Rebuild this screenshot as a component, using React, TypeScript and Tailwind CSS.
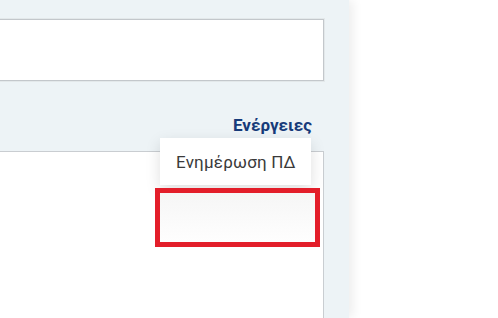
export default function App() {
  return (
    <div className="w-[498px] h-[318px] flex overflow-hidden bg-white font-['Roboto',sans-serif]">
      {/* side panel */}
      <div className="relative z-10 w-[349px] h-full shrink-0 bg-[#edf3f6] shadow-[4px_0_10px_rgba(0,0,0,0.07)] pt-[19px] pr-[25px] flex flex-col">
        <div className="ml-[-12px] h-[62px] bg-white border border-[#c3c7cb] shadow-[0_0_0_1px_#e3e8ea]" />

        <div className="ml-[-12px] mt-[34px] flex justify-end pr-[12px]">
          <span className="text-[17px] leading-[20px] font-bold text-[#173b7a]">Ενέργειες</span>
        </div>

        <div className="relative ml-[-12px] mt-[16px] flex-1 bg-white border-t border-r border-[#c9cdd1]">
          <div className="absolute top-[-14px] right-[12px] w-[151px] h-[47px] bg-white shadow-[0_5px_14px_rgba(0,0,0,0.13)] flex items-center pl-[16px]">
            <span className="text-[17px] leading-[24px] text-[#3a3a3a] tracking-[0.2px]">Ενημέρωση ΠΔ</span>
          </div>
          <div className="absolute top-[36px] right-[3px] w-[165px] h-[59px] border-[5px] border-[#e31e2a] bg-gradient-to-b from-[#f6f6f6] to-[#fefefe]" />
        </div>
      </div>
      <div className="flex-1 bg-white" />
    </div>
  )
}
